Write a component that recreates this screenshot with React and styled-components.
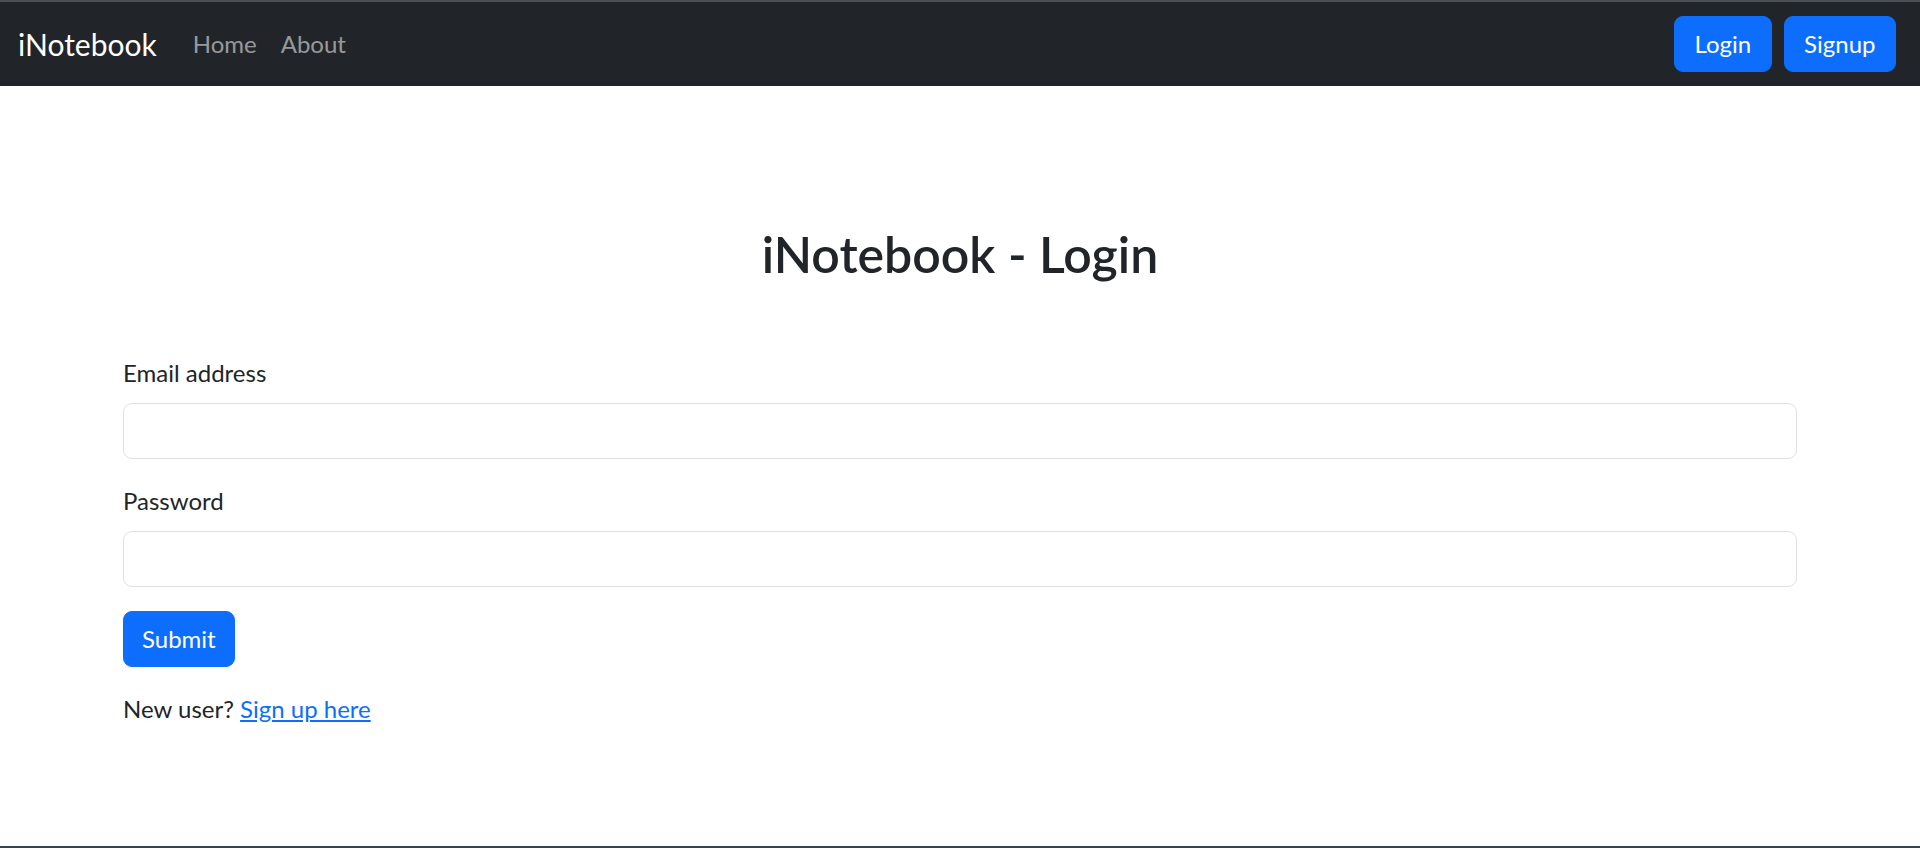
import React, { useState } from 'react';
import styled, { createGlobalStyle } from 'styled-components';

const GlobalStyle = createGlobalStyle`
  * {
    box-sizing: border-box;
  }
  body {
    margin: 0;
    background: #fff;
    font-family: Lato, "Noto Sans", sans-serif;
    font-size: 24px;
    line-height: 1.5;
    color: #212529;
  }
`;

const Page = styled.div`
  min-height: 848px;
  display: flex;
  flex-direction: column;
  border-top: 2px solid #4e4f51;
  border-bottom: 2px solid #3a4253;
`;

const Navbar = styled.nav`
  background: #212529;
  padding: 12px 18px;
  display: flex;
  align-items: center;
`;

const Brand = styled.a`
  color: #fff;
  font-size: 30px;
  line-height: 45px;
  padding: 7.5px 0;
  margin-right: 24px;
  text-decoration: none;
  cursor: pointer;
`;

const NavList = styled.ul`
  display: flex;
  list-style: none;
  margin: 0;
  padding: 0;
  flex: 1;
`;

const NavLink = styled.a`
  display: block;
  padding: 12px;
  color: rgba(255, 255, 255, 0.55);
  text-decoration: none;
  cursor: pointer;
`;

const NavActions = styled.div`
  display: flex;
  gap: 12px;
  margin-right: 6px;
`;

const Button = styled.button`
  font-family: inherit;
  font-size: 24px;
  line-height: 36px;
  padding: 9px ${(p) => (p.$wide ? '19.5px' : '18px')};
  border: 1.5px solid #0d6efd;
  border-radius: 9px;
  background: #0d6efd;
  color: #fff;
  cursor: pointer;
`;

const Main = styled.main`
  flex: 1;
  width: 100%;
  max-width: 1710px;
  margin: 0 auto;
  padding: 0 18px;
`;

const Title = styled.h2`
  margin: 138px 0 71px;
  text-align: center;
  font-size: 50px;
  line-height: 1.2;
  font-weight: 600;
`;

const Field = styled.div`
  margin-bottom: 24px;
`;

const Label = styled.label`
  display: block;
  margin-bottom: 12px;
`;

const Input = styled.input`
  display: block;
  width: 100%;
  height: 56px;
  padding: 9px 18px;
  font-family: inherit;
  font-size: 24px;
  border: 1.5px solid #dee2e6;
  border-radius: 9px;
  color: #212529;
  outline: none;
`;

const Note = styled.p`
  margin: 24px 0 0;
`;

const Link = styled.a`
  color: #0d6efd;
  text-decoration: underline;
  cursor: pointer;
`;

const App = () => {
  const [email, setEmail] = useState('');
  const [password, setPassword] = useState('');

  return (
    <Page>
      <GlobalStyle />
      <Navbar>
        <Brand>iNotebook</Brand>
        <NavList>
          <li><NavLink>Home</NavLink></li>
          <li><NavLink>About</NavLink></li>
        </NavList>
        <NavActions>
          <Button $wide>Login</Button>
          <Button $wide>Signup</Button>
        </NavActions>
      </Navbar>
      <Main>
        <Title>iNotebook - Login</Title>
        <form onSubmit={(e) => e.preventDefault()}>
          <Field>
            <Label htmlFor="email">Email address</Label>
            <Input
              id="email"
              type="email"
              value={email}
              onChange={(e) => setEmail(e.target.value)}
            />
          </Field>
          <Field>
            <Label htmlFor="password">Password</Label>
            <Input
              id="password"
              type="password"
              value={password}
              onChange={(e) => setPassword(e.target.value)}
            />
          </Field>
          <Button type="submit">Submit</Button>
        </form>
        <Note>
          New user? <Link>Sign up here</Link>
        </Note>
      </Main>
    </Page>
  );
};

export default App;
